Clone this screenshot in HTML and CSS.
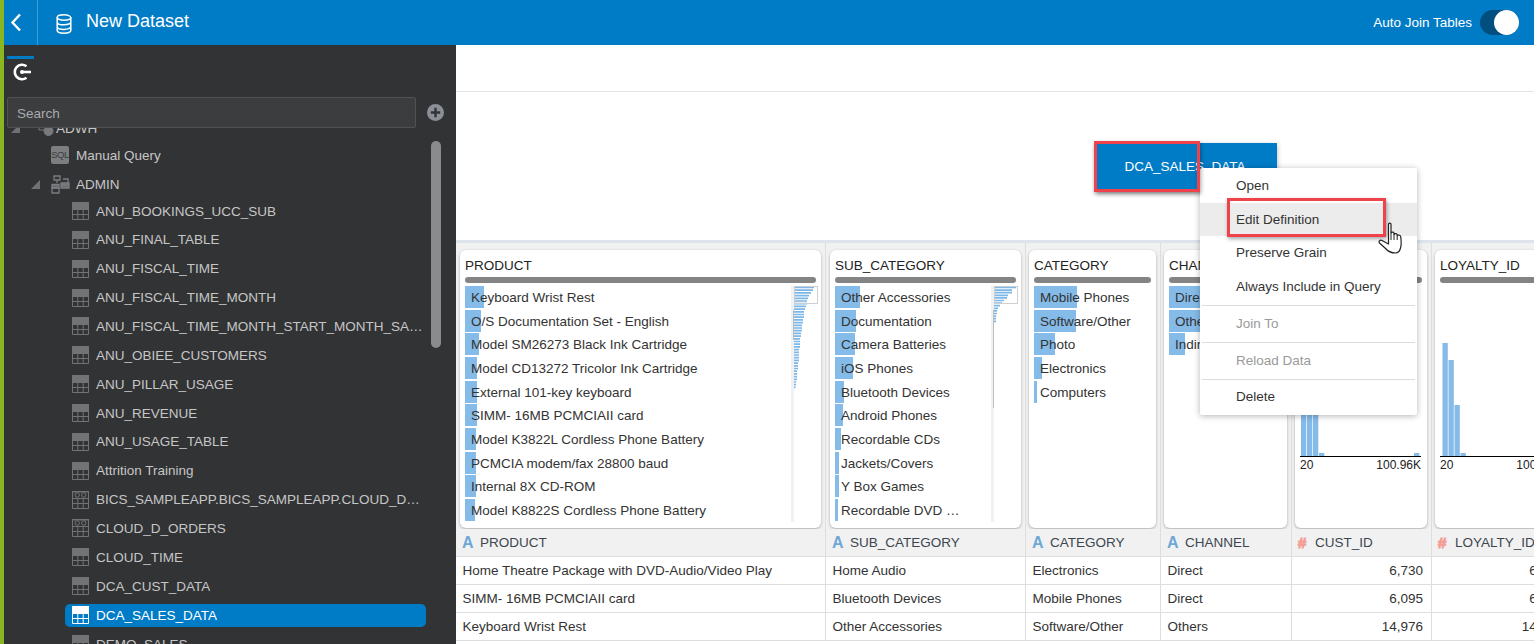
FILE: index.html
```html
<!DOCTYPE html>
<html lang="en">
<head>
<meta charset="UTF-8">
<meta name="viewport" content="width=device-width, initial-scale=1.0">
<title>New Dataset</title>
<link rel="stylesheet" href="styles.css">
</head>
<body>
    <!-- shared tree icons -->
    <svg class="icon-defs" width="0" height="0">
        <symbol id="ico-table" viewBox="0 0 17 18">
            <path d="M.5.5h16v17H.5z" fill="none" stroke="currentColor"/>
            <path d="M0 0h17v7H0z" fill="currentColor"/>
            <path d="M0 7.500h17M0 12.500h17M5.800 7v11M11.200 7v11" stroke="currentColor" fill="none"/>
        </symbol>
        <symbol id="ico-view" viewBox="0 0 17 18">
            <path d="M.5.5h16v17H.5z" fill="none" stroke="currentColor"/>
            <path d="M0 0h17v1.500H0z" fill="currentColor"/>
            <circle cx="5.200" cy="4" r="2.200" fill="none" stroke="currentColor"/>
            <circle cx="11.800" cy="4" r="2.200" fill="none" stroke="currentColor"/>
            <path d="M0 7.500h17M0 12.500h17M5.800 7v11M11.200 7v11" stroke="currentColor" fill="none"/>
        </symbol>
    </svg>

    <div class="app">
        <div class="accent"></div>
        <div class="page">
            <header class="topbar">
                <button class="back-btn" aria-label="Back">
                    <svg width="12" height="19" viewBox="0 0 12 19"><path d="M10 1.500 2.500 9.500l7.500 8" fill="none" stroke="#fff" stroke-width="2.400"/></svg>
                </button>
                <svg class="db-icon" width="16" height="20" viewBox="0 0 16 20" fill="none" stroke="#fff" stroke-width="1.500">
                    <ellipse cx="8" cy="3.500" rx="6.800" ry="2.700"/>
                    <path d="M1.200 3.500v13c0 1.600 3 2.700 6.800 2.700s6.800-1.100 6.800-2.700v-13M1.200 8.200c0 1.500 3 2.600 6.800 2.600s6.800-1.100 6.800-2.600M1.200 12.800c0 1.500 3 2.600 6.800 2.600s6.800-1.100 6.800-2.600"/>
                </svg>
                <h1 class="page-title">New Dataset</h1>
                <span class="join-label">Auto Join Tables</span>
                <span class="toggle"><span class="toggle-knob"></span></span>
            </header>

            <div class="workspace">
                <aside class="sidebar">
                    <div class="side-tab">
                        <svg width="19" height="18" viewBox="0 0 19 18" fill="none" stroke="#fff" stroke-width="2.600">
                            <path d="M13.500 3.200a7.300 7.300 0 1 0 0 11.600"/>
                            <path d="M9 9h9"/>
                            <circle cx="9" cy="9" r="2" fill="#fff" stroke="none"/>
                        </svg>
                    </div>
                    <div class="search-row">
                        <div class="search-box">Search</div>
                        <span class="add-btn">
                            <svg width="17" height="17" viewBox="0 0 17 17"><circle cx="8.500" cy="8.500" r="8.500" fill="#8b9096"/><path d="M8.500 3.800v9.400M3.800 8.500h9.400" stroke="#323335" stroke-width="2.400"/></svg>
                        </span>
                    </div>
                    <div class="tree">
                        <div class="scroll-thumb"></div>
                        <div class="tree-row lvl-0 clipped-row">
                            <span class="twisty"></span>
                            <svg class="node-ico" width="24" height="18" viewBox="0 0 24 18" fill="none" stroke="#77797c"><path d="M1 3h5M8 5h7v6H8z"/><circle cx="17.500" cy="12" r="4.500" fill="#77797c"/></svg>
                            <span class="node-name">ADWH</span>
                        </div>
                        <div class="tree-row lvl-1">
                            <span class="sql-ico">SQL</span>
                            <span class="node-name">Manual Query</span>
                        </div>
                        <div class="tree-row lvl-schema">
                            <span class="twisty"></span>
                            <svg class="node-ico" width="19" height="19" viewBox="0 0 19 19" fill="none" stroke="#7b7d80" stroke-width="1.300"><path d="M3 1h6v4H3zM6 5v3M1 13h7v5H1z"/><path d="M1 9.500h7v3.500H1zM10 8h8v5h-8zM10 8h8v2h-8z" fill="#6a6c6f"/><path d="M12 4h5v4"/></svg>
                            <span class="node-name">ADMIN</span>
                        </div>
                        <div class="tree-row lvl-2"><svg class="tbl-ico"><use href="#ico-table"/></svg><span class="node-name">ANU_BOOKINGS_UCC_SUB</span></div>
                        <div class="tree-row lvl-2"><svg class="tbl-ico"><use href="#ico-table"/></svg><span class="node-name">ANU_FINAL_TABLE</span></div>
                        <div class="tree-row lvl-2"><svg class="tbl-ico"><use href="#ico-table"/></svg><span class="node-name">ANU_FISCAL_TIME</span></div>
                        <div class="tree-row lvl-2"><svg class="tbl-ico"><use href="#ico-table"/></svg><span class="node-name">ANU_FISCAL_TIME_MONTH</span></div>
                        <div class="tree-row lvl-2"><svg class="tbl-ico"><use href="#ico-table"/></svg><span class="node-name">ANU_FISCAL_TIME_MONTH_START_MONTH_SALES_DATA</span></div>
                        <div class="tree-row lvl-2"><svg class="tbl-ico"><use href="#ico-table"/></svg><span class="node-name">ANU_OBIEE_CUSTOMERS</span></div>
                        <div class="tree-row lvl-2"><svg class="tbl-ico"><use href="#ico-table"/></svg><span class="node-name">ANU_PILLAR_USAGE</span></div>
                        <div class="tree-row lvl-2"><svg class="tbl-ico"><use href="#ico-table"/></svg><span class="node-name">ANU_REVENUE</span></div>
                        <div class="tree-row lvl-2"><svg class="tbl-ico"><use href="#ico-table"/></svg><span class="node-name">ANU_USAGE_TABLE</span></div>
                        <div class="tree-row lvl-2"><svg class="tbl-ico"><use href="#ico-table"/></svg><span class="node-name">Attrition Training</span></div>
                        <div class="tree-row lvl-2"><svg class="tbl-ico"><use href="#ico-view"/></svg><span class="node-name">BICS_SAMPLEAPP.BICS_SAMPLEAPP.CLOUD_D_ORDERS_VIEW</span></div>
                        <div class="tree-row lvl-2"><svg class="tbl-ico"><use href="#ico-view"/></svg><span class="node-name">CLOUD_D_ORDERS</span></div>
                        <div class="tree-row lvl-2"><svg class="tbl-ico"><use href="#ico-table"/></svg><span class="node-name">CLOUD_TIME</span></div>
                        <div class="tree-row lvl-2"><svg class="tbl-ico"><use href="#ico-table"/></svg><span class="node-name">DCA_CUST_DATA</span></div>
                        <div class="tree-row lvl-2 selected"><svg class="tbl-ico"><use href="#ico-table"/></svg><span class="node-name">DCA_SALES_DATA</span></div>
                        <div class="tree-row lvl-2"><svg class="tbl-ico"><use href="#ico-table"/></svg><span class="node-name">DEMO_SALES</span></div>
                    </div>
                </aside>

                <main class="content">
                    <div class="content-toolbar"></div>
                    <div class="diagram">
                        <div class="table-node">DCA_SALES_DATA</div>
                    </div>

                    <div class="data-grid">
                        <!-- summary cards -->
                        <div class="col-cell">
                            <div class="card">
                                <div class="card-title">PRODUCT</div>
                                <div class="card-track"></div>
                                <div class="card-body">
                                    <ul class="value-list">
                                        <li><span class="val-bar" style="width:19px"></span><span class="val-text">Keyboard Wrist Rest</span></li>
                                        <li><span class="val-bar" style="width:16px"></span><span class="val-text">O/S Documentation Set - English</span></li>
                                        <li><span class="val-bar" style="width:14px"></span><span class="val-text">Model SM26273 Black Ink Cartridge</span></li>
                                        <li><span class="val-bar" style="width:12px"></span><span class="val-text">Model CD13272 Tricolor Ink Cartridge</span></li>
                                        <li><span class="val-bar" style="width:12px"></span><span class="val-text">External 101-key keyboard</span></li>
                                        <li><span class="val-bar" style="width:12px"></span><span class="val-text">SIMM- 16MB PCMCIAII card</span></li>
                                        <li><span class="val-bar" style="width:11px"></span><span class="val-text">Model K3822L Cordless Phone Battery</span></li>
                                        <li><span class="val-bar" style="width:11px"></span><span class="val-text">PCMCIA modem/fax 28800 baud</span></li>
                                        <li><span class="val-bar" style="width:11px"></span><span class="val-text">Internal 8X CD-ROM</span></li>
                                        <li><span class="val-bar" style="width:10px"></span><span class="val-text">Model K8822S Cordless Phone Battery</span></li>
                                    </ul>
                                    <div class="mini-map">
                                        <div class="mini-thumb"></div>
                                        <div class="mini-frame"></div>
                                        <svg width="24" height="110" viewBox="0 0 24 110"><path d="M0 1.500h20M0 4.200h19M0 6.900h17M0 9.600h15M0 12.300h14M0 15h13M0 17.700h13M0 20.400h12M0 23.100h11M0 25.800h10M0 28.500h10M0 31.200h10M0 33.900h9M0 36.600h9M0 39.300h8M0 42h8M0 44.700h8M0 47.400h7M0 50.100h7M0 52.800h6M0 55.500h6M0 58.200h6M0 60.900h6M0 63.600h5M0 66.300h5M0 69h5M0 71.700h5M0 74.400h5M0 77.100h4M0 79.800h4M0 82.500h4M0 85.200h3M0 87.900h3M0 90.600h3M0 93.300h3M0 96h2M0 98.700h2M0 101.400h1.500" stroke="#7db7e8" stroke-width="1.700" fill="none"/></svg>
                                    </div>
                                </div>
                            </div>
                        </div>

                        <div class="col-cell">
                            <div class="card">
                                <div class="card-title">SUB_CATEGORY</div>
                                <div class="card-track"></div>
                                <div class="card-body">
                                    <ul class="value-list">
                                        <li><span class="val-bar" style="width:25px"></span><span class="val-text">Other Accessories</span></li>
                                        <li><span class="val-bar" style="width:21px"></span><span class="val-text">Documentation</span></li>
                                        <li><span class="val-bar" style="width:20px"></span><span class="val-text">Camera Batteries</span></li>
                                        <li><span class="val-bar" style="width:18px"></span><span class="val-text">iOS Phones</span></li>
                                        <li><span class="val-bar" style="width:9px"></span><span class="val-text">Bluetooth Devices</span></li>
                                        <li><span class="val-bar" style="width:8px"></span><span class="val-text">Android Phones</span></li>
                                        <li><span class="val-bar" style="width:6px"></span><span class="val-text">Recordable CDs</span></li>
                                        <li><span class="val-bar" style="width:4px"></span><span class="val-text">Jackets/Covers</span></li>
                                        <li><span class="val-bar" style="width:4px"></span><span class="val-text">Y Box Games</span></li>
                                        <li><span class="val-bar" style="width:3px"></span><span class="val-text">Recordable DVD …</span></li>
                                    </ul>
                                    <div class="mini-map">
                                        <div class="mini-thumb long"></div>
                                        <div class="mini-frame"></div>
                                        <svg width="24" height="40" viewBox="0 0 24 40"><path d="M0 1.500h22M0 4.100h18M0 6.700h18M0 9.300h14M0 11.900h13M0 14.500h10M0 17.100h8M0 19.700h6M0 22.300h4M0 24.900h3M0 27.500h3M0 30.100h2M0 32.700h2M0 35.300h2" stroke="#7db7e8" stroke-width="1.700" fill="none"/></svg>
                                    </div>
                                </div>
                            </div>
                        </div>

                        <div class="col-cell">
                            <div class="card">
                                <div class="card-title">CATEGORY</div>
                                <div class="card-track"></div>
                                <div class="card-body">
                                    <ul class="value-list">
                                        <li><span class="val-bar" style="width:43px"></span><span class="val-text">Mobile Phones</span></li>
                                        <li><span class="val-bar" style="width:42px"></span><span class="val-text">Software/Other</span></li>
                                        <li><span class="val-bar" style="width:21px"></span><span class="val-text">Photo</span></li>
                                        <li><span class="val-bar" style="width:8px"></span><span class="val-text">Electronics</span></li>
                                        <li><span class="val-bar" style="width:3px"></span><span class="val-text">Computers</span></li>
                                    </ul>
                                </div>
                            </div>
                        </div>

                        <div class="col-cell">
                            <div class="card">
                                <div class="card-title">CHANNEL</div>
                                <div class="card-track"></div>
                                <div class="card-body">
                                    <ul class="value-list">
                                        <li><span class="val-bar" style="width:70px"></span><span class="val-text">Direct</span></li>
                                        <li><span class="val-bar" style="width:40px"></span><span class="val-text">Others</span></li>
                                        <li><span class="val-bar" style="width:16px"></span><span class="val-text">Indirect</span></li>
                                    </ul>
                                </div>
                            </div>
                        </div>

                        <div class="col-cell">
                            <div class="card">
                                <div class="card-title">CUST_ID</div>
                                <div class="card-track"></div>
                                <div class="histogram">
                                    <svg width="121" height="170" viewBox="0 0 121 170" fill="#85bbe8">
                                        <rect x="1" y="57" width="5.300" height="113"/>
                                        <rect x="7" y="74" width="5.300" height="96"/>
                                        <rect x="13" y="119" width="5.300" height="51"/>
                                        <rect x="19" y="167" width="5.300" height="3"/>
                                        <rect x="114" y="167" width="5.300" height="3"/>
                                    </svg>
                                </div>
                                <div class="axis-labels"><span>20</span><span>100.96K</span></div>
                            </div>
                        </div>

                        <div class="col-cell">
                            <div class="card">
                                <div class="card-title">LOYALTY_ID</div>
                                <div class="card-track"></div>
                                <div class="histogram">
                                    <svg width="121" height="170" viewBox="0 0 121 170" fill="#85bbe8">
                                        <rect x="2.500" y="57" width="5.300" height="113"/>
                                        <rect x="8.500" y="74" width="5.300" height="96"/>
                                        <rect x="14.500" y="119" width="5.300" height="51"/>
                                        <rect x="20.500" y="167" width="5.300" height="3"/>
                                    </svg>
                                </div>
                                <div class="axis-labels"><span>20</span><span>100.96K</span></div>
                            </div>
                        </div>

                        <!-- column headers -->
                        <div class="col-head"><span class="type-attr">A</span>PRODUCT</div>
                        <div class="col-head"><span class="type-attr">A</span>SUB_CATEGORY</div>
                        <div class="col-head"><span class="type-attr">A</span>CATEGORY</div>
                        <div class="col-head"><span class="type-attr">A</span>CHANNEL</div>
                        <div class="col-head"><span class="type-num">#</span>CUST_ID</div>
                        <div class="col-head"><span class="type-num">#</span>LOYALTY_ID</div>

                        <!-- data rows -->
                        <div class="data-cell">Home Theatre Package with DVD-Audio/Video Play</div>
                        <div class="data-cell">Home Audio</div>
                        <div class="data-cell">Electronics</div>
                        <div class="data-cell">Direct</div>
                        <div class="data-cell num">6,730</div>
                        <div class="data-cell num">6,730</div>

                        <div class="data-cell">SIMM- 16MB PCMCIAII card</div>
                        <div class="data-cell">Bluetooth Devices</div>
                        <div class="data-cell">Mobile Phones</div>
                        <div class="data-cell">Direct</div>
                        <div class="data-cell num">6,095</div>
                        <div class="data-cell num">6,095</div>

                        <div class="data-cell">Keyboard Wrist Rest</div>
                        <div class="data-cell">Other Accessories</div>
                        <div class="data-cell">Software/Other</div>
                        <div class="data-cell">Others</div>
                        <div class="data-cell num">14,976</div>
                        <div class="data-cell num">14,976</div>
                    </div>

                    <!-- context menu + annotation boxes, they lie over the page -->
                    <div class="context-menu">
                        <div class="menu-item">Open</div>
                        <div class="menu-item hover">Edit Definition</div>
                        <div class="menu-item">Preserve Grain</div>
                        <div class="menu-item">Always Include in Query</div>
                        <div class="menu-sep"></div>
                        <div class="menu-item off">Join To</div>
                        <div class="menu-sep"></div>
                        <div class="menu-item off">Reload Data</div>
                        <div class="menu-sep"></div>
                        <div class="menu-item">Delete</div>
                    </div>
                    <div class="callout callout-node"></div>
                    <div class="callout callout-item"></div>
                    <svg class="hand-cursor" width="26" height="33" viewBox="0 0 26 33">
                        <path d="M10.500 2.300C10.500.8 13 .8 13 2.300V11C13 9.800 15.800 9.800 16 11v1.500c.2-1.300 3-1.300 3.200.2v1.100c.4-1.200 3.300-1 3.500.7.500 3.500.8 8.500-.2 11.500-.7 3-2 5-5 5-4.500 0-7.500-1.500-10.500-5l-5.500-5c-1.500-1.500.5-3.500 2.500-2.500l6.500 3.500z" fill="#fff" stroke="#222" stroke-width="1.200" stroke-linejoin="round"/>
                        <path d="M13 11v7M16 12v6M19.200 13.500V18" fill="none" stroke="#222"/>
                    </svg>
                </main>
            </div>
        </div>
    </div>
</body>
</html>
```

FILE: styles.css
```css
html, body {
    margin: 0;
    height: 100%;
    overflow: hidden;
}
body {
    font-family: "Liberation Sans", Arial, sans-serif;
    font-size: 13.5px;
    color: #333;
    background-color: #fff;
}
.icon-defs {
    position: absolute;
}
.app {
    display: flex;
    height: 100vh;
}
.accent {
    width: 4px;
    flex: none;
    background-color: #8ab622;
}
.page {
    flex: 1;
    min-width: 0;
    display: flex;
    flex-direction: column;
}

/* top bar */
.topbar {
    height: 45px;
    flex: none;
    display: flex;
    align-items: center;
    padding-right: 15px;
    background-color: #007cc7;
    color: #fff;
}
.back-btn {
    width: 34px;
    height: 45px;
    padding: 0 12px 0 6px;
    border: none;
    border-right: 1px solid #3d9ad6;
    background: none;
    display: flex;
    align-items: center;
}
.db-icon {
    margin: 2px 0 0 18px;
}
.page-title {
    margin: 0 0 2px 14px;
    font-size: 18px;
    font-weight: normal;
    flex: 1;
}
.join-label {
    font-size: 13.5px;
    margin-right: 8px;
}
.toggle {
    width: 39px;
    height: 25px;
    border-radius: 13px;
    background-color: #024f7f;
    display: flex;
    justify-content: flex-end;
}
.toggle-knob {
    width: 25px;
    height: 25px;
    border-radius: 50%;
    background-color: #fff;
}

/* left panel */
.workspace {
    flex: 1;
    min-height: 0;
    display: flex;
}
.sidebar {
    width: 452px;
    flex: none;
    display: flex;
    flex-direction: column;
    background-color: #323335;
    color: #c6c6c6;
}
.side-tab {
    width: 21px;
    height: 26px;
    margin: 11px 0 0 3px;
    padding: 4px 0 0 6px;
    border-top: 3px solid #007cc7;
}
.search-row {
    display: flex;
    align-items: center;
    margin-top: 8px;
    padding-left: 3px;
}
.search-box {
    width: 409px;
    height: 31px;
    line-height: 31px;
    padding-left: 9px;
    box-sizing: border-box;
    background-color: #3c3d3f;
    border: 1px solid #505153;
    border-radius: 2px;
    color: #a9abad;
}
.add-btn {
    margin-left: 11px;
    height: 17px;
}
.tree {
    flex: 1;
    min-height: 0;
    overflow: hidden;
    position: relative;
}
.scroll-thumb {
    position: absolute;
    left: 427px;
    top: 13px;
    width: 10px;
    height: 207px;
    border-radius: 5px;
    background-color: #8a8b8d;
}
.tree-row {
    height: 28.87px;
    display: flex;
    align-items: center;
    box-sizing: border-box;
    margin-right: 31px;
}
.clipped-row {
    margin-top: -14.4px;
    margin-bottom: -1.6px;
}
.lvl-0 { padding-left: 7px; }
.lvl-1 { padding-left: 47px; }
.lvl-schema {
    padding-left: 27px;
    margin-bottom: -2px;
}
.lvl-2 { padding-left: 68px; }
.twisty {
    width: 0;
    height: 0;
    flex: none;
    margin-right: 11px;
    border-style: solid;
    border-width: 0 0 9px 9px;
    border-color: transparent transparent #6f7174 transparent;
}
.node-ico {
    flex: none;
    margin-right: 6px;
}
.lvl-0 .node-ico {
    margin-right: 1px;
}
.sql-ico {
    width: 18px;
    height: 18px;
    line-height: 18px;
    margin-right: 7px;
    flex: none;
    border-radius: 2px;
    background-color: #7d7e80;
    color: #3c3d3f;
    font-size: 9.5px;
    letter-spacing: -0.5px;
    text-align: center;
}
.tbl-ico {
    width: 17px;
    height: 18px;
    margin-right: 7px;
    flex: none;
    color: #717376;
}
.node-name {
    white-space: nowrap;
    overflow: hidden;
    text-overflow: ellipsis;
}
.tree-row.selected {
    height: 23px;
    margin: 3px 30px 3px 61px;
    padding-left: 7px;
    border-radius: 5px;
    background-color: #007cc7;
    color: #fff;
}
.selected .tbl-ico {
    color: #fff;
}

/* right side */
.content {
    flex: 1;
    min-width: 0;
    display: flex;
    flex-direction: column;
    position: relative;
    overflow: hidden;
}
.content-toolbar {
    height: 46px;
    flex: none;
    border-bottom: 1px solid #e4e4e4;
}
.diagram {
    height: 148px;
    flex: none;
    box-sizing: border-box;
    padding: 51px 0 0 640px;
}
.table-node {
    width: 181px;
    height: 48px;
    line-height: 47px;
    padding-right: 3px;
    box-sizing: border-box;
    text-align: center;
    color: #fff;
    background-color: #007cc7;
    box-shadow: 0 2px 5px rgba(0,0,0,0.3);
}
.data-grid {
    flex: 1;
    display: grid;
    grid-template-columns: 370px 200px 135px 131px 140px 140px;
    grid-template-rows: 286px 28px 28px 28px 28px;
    width: 1116px;
    border-top: 3px solid #dde4ec;
    background-color: #fff;
}
.col-cell {
    padding: 7px 4px 0 3px;
    border-right: 1px solid #dedede;
    background-color: #f1f1f1;
    box-sizing: border-box;
}
.col-cell:nth-child(-n+2) {
    padding-left: 4px;
}
.card {
    height: 278px;
    padding: 7px 5px 0;
    box-sizing: border-box;
    background-color: #fff;
    border-radius: 6px;
    box-shadow: 0 1px 3px rgba(0,0,0,0.3);
    overflow: hidden;
}
.card-title {
    height: 16px;
    line-height: 18px;
    color: #222;
    white-space: nowrap;
}
.card-track {
    height: 6px;
    margin-top: 4px;
    border-radius: 3px;
    background-color: #848484;
}
.card-body {
    display: flex;
    margin-top: 3px;
}
.value-list {
    flex: 1;
    min-width: 0;
    margin: 0;
    padding: 0;
    list-style: none;
}
.value-list li {
    height: 23.67px;
    line-height: 23.67px;
    position: relative;
    white-space: nowrap;
}
.val-bar {
    position: absolute;
    left: 0;
    top: 0;
    height: 22px;
    background-color: #85bbe8;
}
.val-text {
    position: relative;
    padding-left: 6px;
}
.mini-map {
    width: 24px;
    height: 236px;
    flex: none;
    margin-right: -2px;
    position: relative;
    border-left: 3px solid #f1f1f1;
}
.mini-map svg {
    display: block;
}
.mini-frame {
    position: absolute;
    left: 0;
    top: 0;
    width: 24px;
    height: 18px;
    border: 1px solid #cfcfcf;
    box-sizing: border-box;
}
.mini-thumb {
    position: absolute;
    left: -1px;
    top: 24px;
    width: 1px;
    height: 30px;
    background-color: #bdbdbd;
}
.mini-thumb.long {
    height: 98px;
}
.histogram {
    height: 170px;
    margin-top: 3px;
    width: 121px;
    border-bottom: 1px solid #000;
}
.histogram svg {
    display: block;
}
.axis-labels {
    width: 121px;
    display: flex;
    justify-content: space-between;
    font-size: 12px;
    line-height: 16px;
    color: #222;
}
.col-head {
    height: 28px;
    line-height: 27px;
    padding-left: 6px;
    box-sizing: border-box;
    white-space: nowrap;
    background-color: #f1f1f1;
    border-right: 1px solid #dedede;
    border-bottom: 1px solid #dedede;
    color: #3c4650;
}
.type-attr, .type-num {
    display: inline-block;
    width: 18px;
    font-weight: bold;
    font-size: 16px;
    vertical-align: -1px;
}
.type-attr {
    color: #6ea8d6;
}
.type-num {
    width: 17px;
    font-size: 15px;
    color: #f2a097;
    -webkit-text-stroke: 1px #f2a097;
}
.data-cell {
    height: 28px;
    line-height: 28px;
    padding: 0 8px 0 6.5px;
    box-sizing: border-box;
    white-space: nowrap;
    border-right: 1px solid #dedede;
    border-bottom: 1px solid #dedede;
}
.data-cell.num {
    text-align: right;
}

/* context menu */
.context-menu {
    position: absolute;
    left: 744px;
    top: 123px;
    width: 217px;
    height: 247px;
    padding-top: 1px;
    box-sizing: border-box;
    background-color: #fff;
    border-radius: 2px;
    box-shadow: 0 1px 6px rgba(0,0,0,0.3);
}
.menu-item {
    height: 33.5px;
    line-height: 33px;
    padding-left: 36px;
    color: #333;
}
.menu-item.hover {
    background-color: #ececec;
}
.menu-item.off {
    height: 36px;
    line-height: 35px;
    color: #9a9a9a;
}
.menu-sep {
    height: 1px;
    margin: 0 2px;
    background-color: #dcdcdc;
}
.menu-item + .menu-sep {
    margin-top: 2px;
}
.menu-item.off + .menu-sep {
    margin-top: 0;
}
.callout {
    position: absolute;
    box-sizing: border-box;
    border: 3px solid #f0424a;
    box-shadow: 1px 2px 4px rgba(0,0,0,0.35);
}
.callout-node {
    left: 638px;
    top: 96px;
    width: 106px;
    height: 51px;
}
.callout-item {
    left: 771px;
    top: 153px;
    width: 159px;
    height: 39px;
}
.hand-cursor {
    position: absolute;
    left: 922px;
    top: 177px;
}
```
